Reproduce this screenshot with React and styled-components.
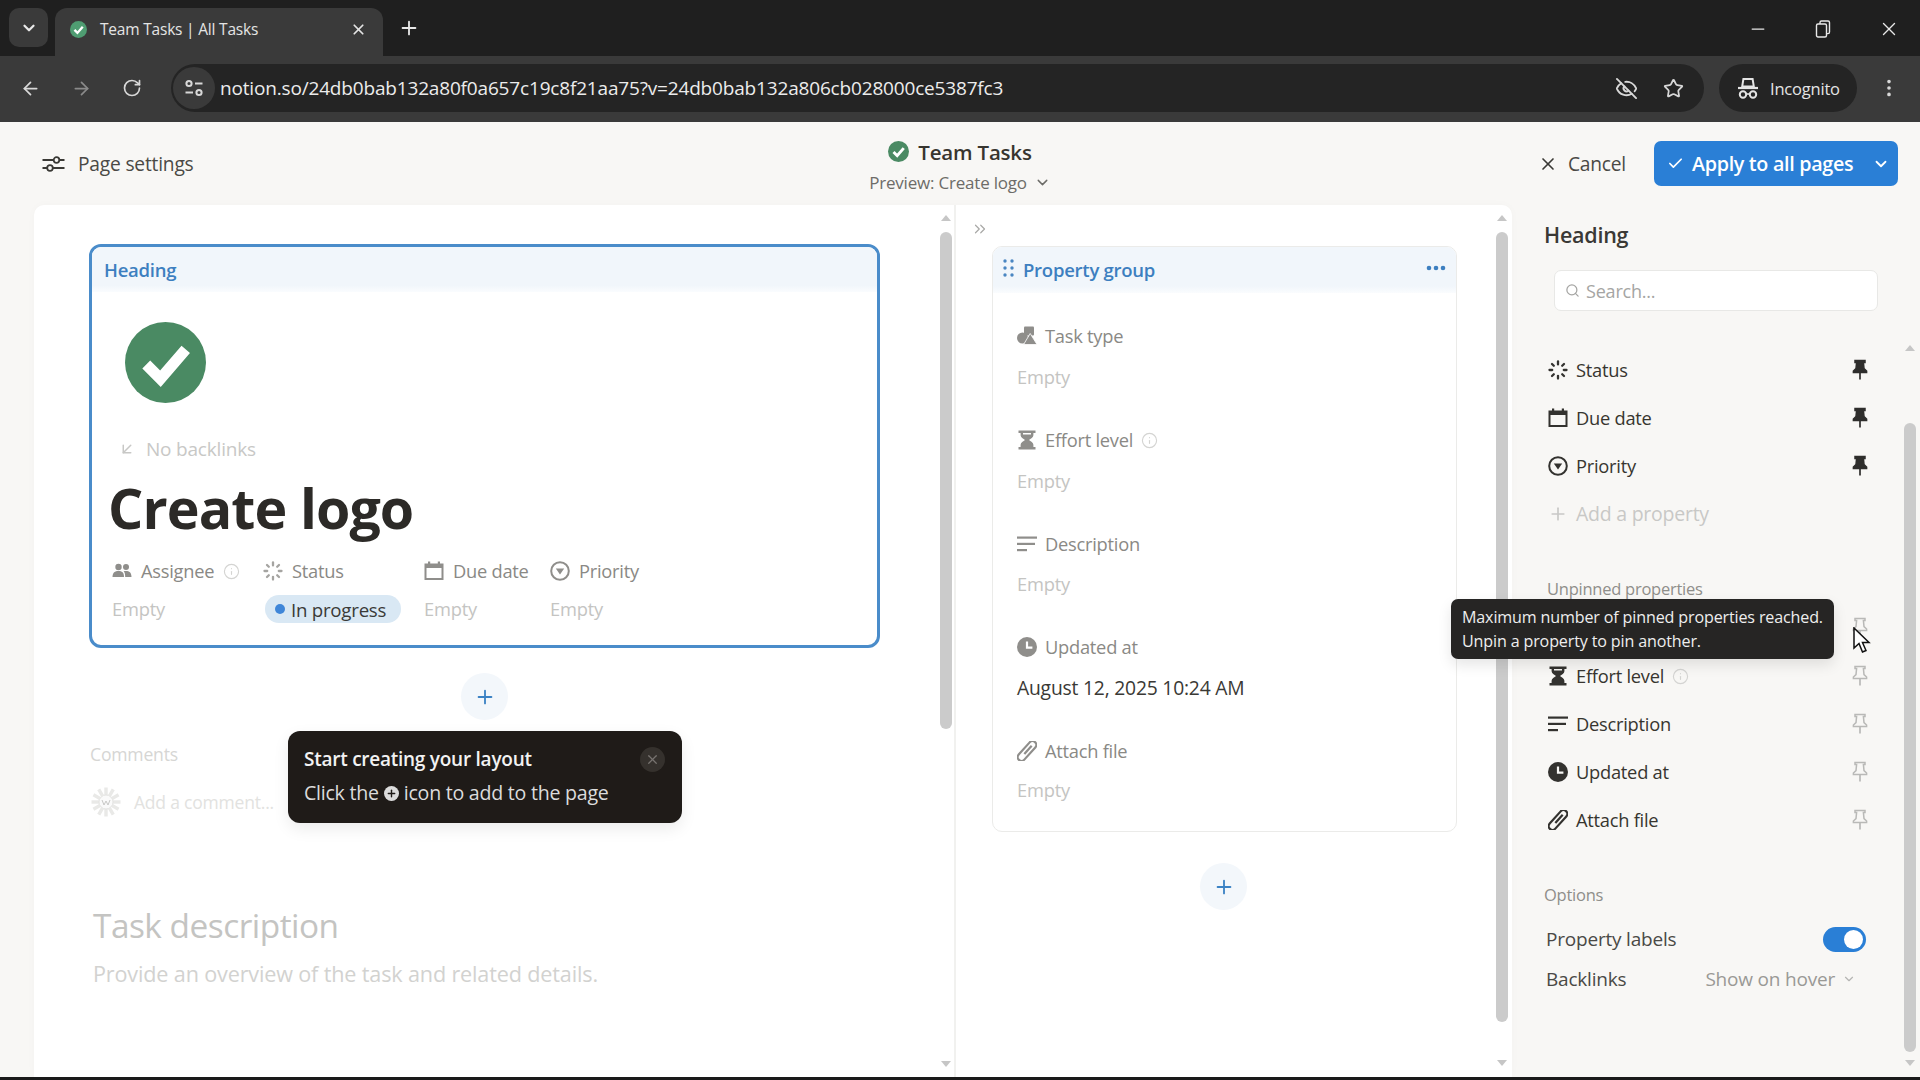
import React from "react";
import styled, { createGlobalStyle } from "styled-components";
import {
  ArrowLeft,
  ArrowRight,
  RotateCw,
  EyeOff,
  Star,
  X,
  Plus,
  Check,
  ChevronDown,
  ChevronsRight,
  Search,
  Minus,
  EllipsisVertical,
  Info,
  ArrowDownLeft,
} from "lucide-react";

const GlobalStyle = createGlobalStyle`
  html, body { margin: 0; padding: 0; background: #f8f7f5; }
  * { box-sizing: border-box; }
  body { font-family: "Open Sans", "Noto Sans", "Liberation Sans", sans-serif; color: #37352f; }
`;

const Page = styled.div`
  width: 1920px;
  height: 1080px;
  display: flex;
  flex-direction: column;
  overflow: hidden;
  background: #f8f7f5;
`;

/* browser chrome */
const TabStrip = styled.div`
  height: 56px;
  flex: none;
  background: #1f1f1f;
  display: flex;
  align-items: flex-end;
  padding-left: 9px;
`;
const TabSearch = styled.div`
  width: 39px;
  height: 39px;
  margin-bottom: 9px;
  border-radius: 10px;
  background: #3a3a3a;
  color: #e8e8e8;
  display: flex;
  align-items: center;
  justify-content: center;
`;
const Tab = styled.div`
  width: 328px;
  height: 48px;
  margin-left: 7px;
  padding: 0 16px 6px 15px;
  background: #3a3a3a;
  border-radius: 12px 12px 0 0;
  display: flex;
  align-items: center;
  color: #e4e4e4;
`;
const TabTitle = styled.span`
  flex: 1;
  margin-left: 13px;
  font-size: 15.5px;
  letter-spacing: -0.2px;
  white-space: nowrap;
`;
const NewTab = styled.div`
  margin: 0 0 17px 15px;
  color: #e8e8e8;
  display: flex;
`;
const WindowButtons = styled.div`
  margin-left: auto;
  margin-bottom: 16px;
  padding-right: 20px;
  display: flex;
  align-items: center;
  gap: 47px;
  color: #e8e8e8;
`;
const Toolbar = styled.div`
  height: 66px;
  flex: none;
  background: #3a3a3a;
  display: flex;
  align-items: center;
  padding: 0 20px 2px 20px;
  color: #d8d8d8;
`;
const NavIcons = styled.div`
  width: 151px;
  display: flex;
  align-items: center;
  gap: 30px;
`;
const Omnibox = styled.div`
  width: 1533px;
  height: 48px;
  background: #242424;
  border-radius: 24px;
  display: flex;
  align-items: center;
  padding: 0 20px 0 2px;
`;
const SiteButton = styled.div`
  width: 42px;
  height: 42px;
  border-radius: 50%;
  background: #3a3a3a;
  display: flex;
  align-items: center;
  justify-content: center;
`;
const Url = styled.span`
  flex: 1;
  margin-left: 5px;
  color: #ececec;
  font-size: 19px;
  letter-spacing: -0.17px;
  white-space: nowrap;
`;
const OmniIcons = styled.div`
  display: flex;
  align-items: center;
  gap: 25px;
`;
const IncognitoPill = styled.div`
  width: 138px;
  height: 48px;
  margin-left: 15px;
  border-radius: 24px;
  background: #242424;
  display: flex;
  align-items: center;
  gap: 11px;
  padding-left: 18px;
  color: #e4e4e4;
  font-size: 16.5px;
  letter-spacing: -0.2px;
`;
const MenuDots = styled.div`
  margin-left: 21px;
  display: flex;
`;

/* page header */
const TopBar = styled.div`
  height: 83px;
  flex: none;
  display: grid;
  grid-template-columns: 1fr auto 1fr;
  align-items: center;
  padding: 0 22px;
`;
const GhostButton = styled.div`
  display: flex;
  align-items: center;
  gap: ${(p) => p.$gap}px;
  margin-left: ${(p) => p.$indent || 0}px;
  font-size: 19.2px;
  letter-spacing: -0.2px;
  color: #4a4945;
`;
const CenterTitle = styled.div`
  margin-top: 7px;
  display: flex;
  flex-direction: column;
  align-items: center;
  gap: 7px;
`;
const DbName = styled.div`
  display: flex;
  align-items: center;
  gap: 9px;
  font-size: 20.5px;
  line-height: 24px;
  font-weight: 600;
  letter-spacing: -0.2px;
`;
const PreviewName = styled.div`
  display: flex;
  align-items: center;
  gap: 7px;
  font-size: 17px;
  line-height: 24px;
  letter-spacing: -0.2px;
  color: #6d6c68;
`;
const TopActions = styled.div`
  display: flex;
  align-items: center;
  justify-content: flex-end;
  gap: 28px;
`;
const ApplyButton = styled.div`
  width: 244px;
  height: 45px;
  border-radius: 7px;
  background: #2a7fd6;
  color: #fff;
  display: flex;
  align-items: center;
  padding-left: 13px;
  font-size: 19.7px;
  font-weight: 600;
  letter-spacing: -0.3px;
  white-space: nowrap;
`;
const ApplyLabel = styled.span`
  flex: 1;
  margin-left: 8px;
`;
const ApplyCaret = styled.span`
  width: 34px;
  display: flex;
  justify-content: center;
`;

/* canvas */
const Body = styled.div`
  flex: 1;
  min-height: 0;
  display: flex;
  padding-left: 34px;
`;
const Canvas = styled.div`
  width: 1478px;
  background: #fff;
  border-radius: 10px 10px 0 0;
  display: flex;
  box-shadow: 0 0 10px rgba(0, 0, 0, 0.025);
`;
const LeftColumn = styled.div`
  width: 922px;
  position: relative;
  display: flex;
  border-right: 2px solid #f1f1ef;
`;
const LeftContent = styled.div`
  width: 906px;
  padding: 39px 0 0 55px;
`;
const RightColumn = styled.div`
  flex: 1;
  display: flex;
`;
const RightContent = styled.div`
  width: 540px;
  padding: 12px 0 0 0;
`;
const ScrollTrack = styled.div`
  width: 12px;
  height: 100%;
  flex: none;
  display: flex;
  flex-direction: column;
  align-items: center;
  padding-top: ${(p) => p.$top || 10}px;
`;
const ScrollUp = styled.div`
  width: 0;
  height: 0;
  border-left: 5px solid transparent;
  border-right: 5px solid transparent;
  border-bottom: 6px solid #c6c6c6;
`;
const ScrollDown = styled(ScrollUp)`
  border-bottom: 0;
  border-top: 6px solid #c6c6c6;
  position: relative;
  top: ${(p) => p.$offset}px;
`;
const ScrollThumb = styled.div`
  width: 12px;
  margin-top: ${(p) => p.$gap}px;
  height: ${(p) => p.$height}px;
  border-radius: 6px;
  background: #cbcbcb;
`;

const HeadingCard = styled.div`
  width: 791px;
  height: 404px;
  border: 3px solid #4a8cca;
  border-radius: 12px;
  overflow: hidden;
`;
const CardHead = styled.div`
  height: ${(p) => p.$height || 45}px;
  background: linear-gradient(#f1f6fb, #f1f6fb 85%, #fafcfe);
  display: flex;
  align-items: center;
  padding: 0 ${(p) => p.$inset || 12}px ${(p) => p.$lift || 0}px ${(p) => p.$pad || 12}px;
  color: #3d7fc0;
  font-size: 18.5px;
  font-weight: 600;
  letter-spacing: -0.25px;
`;
const PageIcon = styled.div`
  width: 81px;
  height: 81px;
  margin: 30px 0 0 33px;
`;
const Backlinks = styled.div`
  margin: 34px 0 0 26px;
  height: 24px;
  display: flex;
  align-items: center;
  gap: 10px;
  color: #c8c8c6;
  font-size: 19px;
  letter-spacing: -0.2px;
`;
const PageTitle = styled.div`
  margin: 15px 0 0 16px;
  font-size: 55.5px;
  line-height: 64px;
  font-weight: 700;
  letter-spacing: -0.9px;
  color: #2c2a27;
`;
const PropGrid = styled.div`
  margin: 19px 0 0 20px;
  display: grid;
  grid-template-columns: 151px 161px 126px auto;
  grid-template-rows: 24px 28px;
  row-gap: 12px;
  align-items: center;
`;
const PropLabel = styled.div`
  display: flex;
  align-items: center;
  gap: ${(p) => (p.$gap === undefined ? 9 : p.$gap)}px;
  color: ${(p) => (p.$dark ? "#37352f" : "#8a8985")};
  font-size: 18.3px;
  line-height: 24px;
  letter-spacing: -0.25px;
  white-space: nowrap;
`;
const AddProperty = styled(PropLabel)`
  color: #c8c8c6;
  font-size: 19.5px;
`;
const EmptyValue = styled.div`
  color: #c4c4c2;
  font-size: 18.3px;
  line-height: 28px;
  letter-spacing: -0.2px;
`;
const StatusPill = styled.div`
  width: 136px;
  height: 28px;
  margin-left: 2px;
  border-radius: 14px;
  background: #d9e8f4;
  display: flex;
  align-items: center;
  gap: 6px;
  padding-left: 10px;
  font-size: 18.7px;
  letter-spacing: -0.25px;
  color: #3a3a38;
`;
const StatusDot = styled.span`
  width: 10px;
  height: 10px;
  border-radius: 50%;
  background: #3f86d8;
`;
const AddButton = styled.div`
  width: 47px;
  height: 47px;
  margin: ${(p) => p.$margin};
  border-radius: 50%;
  background: #f3f7fb;
  color: #3b82c4;
  display: flex;
  align-items: center;
  justify-content: center;
`;
const CommentsLabel = styled.div`
  margin: 22px 0 0 1px;
  color: #d6d6d4;
  font-size: 17.6px;
  line-height: 24px;
  letter-spacing: -0.2px;
`;
const CommentRow = styled.div`
  margin-top: 22px;
  height: 28px;
  display: flex;
  align-items: center;
  gap: 13px;
  color: #e2e2e0;
  font-size: 17.5px;
  letter-spacing: -0.2px;
`;
const SectionTitle = styled.div`
  margin: 87px 0 0 4px;
  color: #c4c4c2;
  font-size: 33.4px;
  line-height: 44px;
  font-weight: 500;
  letter-spacing: -0.5px;
`;
const SectionHint = styled.div`
  margin: 13px 0 0 4px;
  color: #d2d2d0;
  font-size: 21.6px;
  line-height: 28px;
  letter-spacing: -0.15px;
`;
const Coachmark = styled.div`
  position: absolute;
  left: 254px;
  top: 526px;
  width: 394px;
  height: 92px;
  border-radius: 12px;
  background: #1f1b18;
  color: #f2f2f2;
  padding: 16px 16px 0;
  box-shadow: 0 6px 16px rgba(0, 0, 0, 0.08);
`;
const CoachTitle = styled.div`
  font-size: 19px;
  line-height: 24px;
  font-weight: 600;
  letter-spacing: -0.25px;
`;
const CoachText = styled.div`
  margin-top: 10px;
  display: flex;
  align-items: center;
  gap: 5px;
  font-size: 19.6px;
  line-height: 24px;
  letter-spacing: -0.25px;
  color: #dcdcdc;
`;
const CoachDot = styled.span`
  width: 15px;
  height: 15px;
  border-radius: 50%;
  background: #dcdcdc;
  color: #1f1b18;
  display: flex;
  align-items: center;
  justify-content: center;
`;
const CoachClose = styled.div`
  position: absolute;
  top: 16px;
  right: 17px;
  width: 25px;
  height: 25px;
  border-radius: 50%;
  background: #35312d;
  color: #77736f;
  display: flex;
  align-items: center;
  justify-content: center;
`;

/* property group */
const CollapseRow = styled.div`
  height: 24px;
  padding-left: 15px;
  color: #a8a8a6;
  display: flex;
  align-items: center;
`;
const GroupCard = styled.div`
  width: 465px;
  height: 586px;
  margin: 5px 0 0 36px;
  border: 1px solid #ebebe9;
  border-radius: 10px;
  overflow: hidden;
`;
const GroupHeadText = styled.span`
  flex: 1;
  margin-left: 9px;
`;
const GroupBody = styled.div`
  padding: 31px 0 0 24px;
  display: flex;
  flex-direction: column;
  gap: 37px;
`;
const GroupItem = styled.div`
  display: flex;
  flex-direction: column;
  gap: ${(p) => p.$gap || 15}px;
`;
const DateValue = styled.div`
  font-size: 19.3px;
  line-height: 28px;
  letter-spacing: -0.2px;
  color: #3a3935;
`;

/* sidebar */
const Sidebar = styled.div`
  flex: 1;
  position: relative;
  display: flex;
`;
const SideContent = styled.div`
  width: 392px;
  padding: 15px 0 0 32px;
`;
const SideTitle = styled.div`
  font-size: 21.5px;
  line-height: 30px;
  font-weight: 600;
  letter-spacing: -0.25px;
  color: #3a3935;
`;
const SearchBox = styled.div`
  width: 324px;
  height: 41px;
  margin: 20px 0 35px 10px;
  background: #fff;
  border: 1px solid #e8e8e6;
  border-radius: 7px;
  display: flex;
  align-items: center;
  gap: 6px;
  padding-left: 10px;
  color: #a5a5a3;
  font-size: 18px;
  letter-spacing: -0.2px;
`;
const PropRow = styled.div`
  width: 321px;
  height: 48px;
  margin-left: 4px;
  padding-right: 1px;
  display: flex;
  align-items: center;
  justify-content: space-between;
`;
const SectionLabel = styled.div`
  margin: 39px 0 ${(p) => p.$after || 0}px ${(p) => p.$indent}px;
  color: #8f8e8a;
  font-size: 16.5px;
  line-height: 24px;
  font-weight: 500;
  letter-spacing: -0.25px;
`;
const OptionRow = styled.div`
  width: 323px;
  height: ${(p) => p.$height}px;
  margin: ${(p) => p.$margin || "0 0 0 2px"};
  display: flex;
  align-items: center;
  justify-content: space-between;
`;
const OptionName = styled.span`
  font-size: 19px;
  letter-spacing: -0.2px;
  color: #4a4945;
`;
const Toggle = styled.div`
  width: 43px;
  height: 25px;
  margin-right: 3px;
  border-radius: 13px;
  background: #2a7fd6;
  display: flex;
  align-items: center;
  justify-content: flex-end;
  padding-right: 3px;
`;
const ToggleKnob = styled.span`
  width: 19px;
  height: 19px;
  border-radius: 50%;
  background: #fff;
`;
const SelectValue = styled.span`
  display: flex;
  align-items: center;
  gap: 7px;
  margin-right: -2px;
  padding-right: 15px;
  color: #9a9995;
  font-size: 19px;
  letter-spacing: -0.2px;
`;
const PinTooltip = styled.div`
  position: absolute;
  left: -61px;
  top: 394px;
  width: 383px;
  height: 60px;
  padding: 6px 11px;
  border-radius: 7px;
  background: #262524;
  color: #eeeeee;
  font-size: 16.1px;
  line-height: 24px;
  letter-spacing: -0.15px;
  white-space: nowrap;
  box-shadow: 0 6px 14px rgba(0, 0, 0, 0.1);
`;
const Cursor = styled.svg`
  position: absolute;
  left: 341px;
  top: 422px;
`;
const BottomEdge = styled.div`
  height: 3px;
  flex: none;
  background: #1a1a1a;
`;

/* drawn icons */
const Svg = ({ size = 20, color = "currentColor", children, vb = "0 0 20 20" }) => (
  <svg width={size} height={size} viewBox={vb} fill={color} style={{ flex: "none", color }}>
    {children}
  </svg>
);

const CheckCircle = ({ size, color = "#4a8a63" }) => (
  <svg width={size} height={size} viewBox="0 0 80 80" style={{ flex: "none", display: "block" }}>
    <circle cx="40" cy="40" r="40" fill={color} />
    <path d="M21 42 L35 56 L60 27" fill="none" stroke="#fff" strokeWidth="11" />
  </svg>
);

const SettingsIcon = () => (
  <svg width="23" height="20" viewBox="0 0 23 20" fill="#f8f7f5" stroke="#3a3935" strokeWidth="1.8" style={{ flex: "none" }}>
    <path d="M0.5 6 H22.5 M0.5 14 H22.5" />
    <circle cx="14.5" cy="6" r="2.8" />
    <circle cx="8" cy="14" r="2.8" />
  </svg>
);

const SiteTuneIcon = () => (
  <svg width="20" height="20" viewBox="0 0 20 20" fill="none" stroke="#d8d8d8" strokeWidth="2" style={{ flex: "none" }}>
    <circle cx="5" cy="5.5" r="2.6" />
    <path d="M11 5.5 H18.5" />
    <path d="M1.5 14.5 H9" />
    <circle cx="15" cy="14.5" r="2.6" />
  </svg>
);

const PeopleIcon = ({ color }) => (
  <Svg color={color}>
    <circle cx="6.5" cy="6" r="3.2" />
    <circle cx="14" cy="6" r="3" />
    <path d="M0.5 16 C0.5 11.5 3 10 6.5 10 C10 10 12 11.5 12 16 Z" />
    <path d="M13.2 16 C13.2 13 12.8 11.4 11.6 10.3 C12.3 10 13.1 10 14 10 C17.2 10 19.5 11.5 19.5 16 Z" />
  </Svg>
);

const StatusIcon = ({ color }) => (
  <Svg color={color}>
    <g stroke={color} strokeWidth="2.3" strokeLinecap="round">
      <path d="M10 1.5 V4.4" />
      <path d="M16 4 L14.2 5.8" />
      <path d="M18.5 10 H15.8" />
      <path d="M16 16 L14.2 14.2" />
      <path d="M10 18.5 V15.8" />
      <path d="M4 16 L5.8 14.2" />
      <path d="M1.5 10 H4.2" />
      <path d="M4 4 L5.8 5.8" />
    </g>
  </Svg>
);

const CalendarIcon = ({ color }) => (
  <Svg color={color}>
    <path
      fillRule="evenodd"
      d="M4 0.5 H6.2 V2.5 H13.8 V0.5 H16 V2.5 H19.5 V19 H0.5 V2.5 H4 Z M2.5 7 V17 H17.5 V7 Z"
    />
  </Svg>
);

const PriorityIcon = ({ color }) => (
  <Svg color={color}>
    <circle cx="10" cy="10" r="8.8" fill="none" stroke={color} strokeWidth="2" />
    <path d="M5.8 7.6 H14.2 L10 13.6 Z" />
  </Svg>
);

const HourglassIcon = ({ color }) => (
  <Svg color={color}>
    <path
      fillRule="evenodd"
      d="M1.5 0.5 H18.5 V3 H16.4 V5.2 C16.4 7.4 13.6 8.7 12 10 C13.6 11.3 16.4 12.6 16.4 14.8 V17 H18.5 V19.5 H1.5 V17 H3.6 V14.8 C3.6 12.6 6.4 11.3 8 10 C6.4 8.7 3.6 7.4 3.6 5.2 V3 H1.5 Z M6 3 V4.6 H14 V3 Z"
    />
  </Svg>
);

const TextIcon = ({ color }) => (
  <Svg color={color}>
    <rect x="0" y="2.5" width="20" height="2.2" />
    <rect x="0" y="8.8" width="18" height="2.2" />
    <rect x="0" y="15" width="10" height="2.2" />
  </Svg>
);

const ClockIcon = ({ color, bg = "#fff" }) => (
  <Svg color={color}>
    <circle cx="10" cy="10" r="10" />
    <path d="M10 4.4 V10.6 H15.4" fill="none" stroke={bg} strokeWidth="2.2" />
  </Svg>
);

const ClipIcon = ({ color }) => (
  <svg width="20" height="20" viewBox="0 0 20 20" fill="none" stroke={color} strokeWidth="2.2" style={{ flex: "none" }}>
    <g transform="rotate(42 10 10)">
      <rect x="6.2" y="-2" width="7.6" height="24" rx="3.8" />
      <path d="M10 3 V14" />
    </g>
  </svg>
);

const ShapesIcon = ({ color }) => (
  <Svg color={color}>
    <rect x="7" y="0.5" width="10" height="9" rx="1" />
    <circle cx="5.5" cy="12" r="5.5" />
    <path d="M13.2 7.5 L20 18.5 H6.6 Z" stroke="#fff" strokeWidth="0.8" />
  </Svg>
);

const InfoIcon = () => <Info size={17} color="#d4d4d2" strokeWidth={1.6} style={{ flex: "none" }} />;

const PinIcon = ({ filled }) => {
  const color = filled ? "#2f2e2c" : "#b9b9b7";
  return (
    <svg width="16" height="22" viewBox="0 0 16 22" style={{ flex: "none" }}>
      <path
        d="M3 1.5 H13 V3.4 H11.4 L12 9.6 L14.6 12 V13.6 H1.4 V12 L4 9.6 L4.6 3.4 H3 Z"
        fill={filled ? color : "none"}
        stroke={color}
        strokeWidth="1.5"
      />
      <path d="M8 13.6 V20.5" stroke={color} strokeWidth="1.7" />
    </svg>
  );
};

const DragDots = () => (
  <svg width="11" height="18" viewBox="0 0 11 18" style={{ flex: "none", marginBottom: 2 }}>
    {[2, 9, 16].map((y) =>
      [2, 9].map((x) => <circle key={`${x}${y}`} cx={x} cy={y} r="1.7" fill="#4a86c2" />)
    )}
  </svg>
);

const RowDots = () => (
  <svg width="20" height="6" viewBox="0 0 20 6" style={{ flex: "none", marginBottom: 3 }}>
    {[3, 10, 17].map((x) => (
      <circle key={x} cx={x} cy="3" r="2.3" fill="#3d7fc0" />
    ))}
  </svg>
);

const RestoreIcon = () => (
  <svg width="16" height="20" viewBox="0 0 16 20" fill="none" stroke="currentColor" strokeWidth="1.4">
    <rect x="1.5" y="5" width="10" height="13" rx="1.5" />
    <path d="M5 5 V3.5 C5 2.5 5.5 2 6.5 2 H13 C14 2 14.5 2.5 14.5 3.5 V13 C14.5 14 14 14.6 13 14.6 H11.5" />
  </svg>
);

const IncognitoIcon = () => (
  <svg width="22" height="24" viewBox="0 0 22 24" fill="none" stroke="currentColor" style={{ flex: "none" }}>
    <path d="M6.4 3 H15.6 L16.8 10.4 H5.2 Z" strokeWidth="2" />
    <path d="M1 12 H21" strokeWidth="2.2" />
    <circle cx="6" cy="18.5" r="3.2" strokeWidth="2" />
    <circle cx="16" cy="18.5" r="3.2" strokeWidth="2" />
    <path d="M9 18 H13" strokeWidth="1.6" />
  </svg>
);

const AvatarIcon = () => (
  <svg width="30" height="32" viewBox="-15 -16 30 32" style={{ flex: "none", marginLeft: 2 }}>
    {Array.from({ length: 12 }, (_, i) => (
      <line
        key={i}
        x1="0"
        y1="-7"
        x2="0"
        y2="-14.5"
        stroke="#e9e9e7"
        strokeWidth="3.4"
        transform={`rotate(${i * 30})`}
      />
    ))}
    <circle r="7" fill="#fafafa" stroke="#e4e4e2" strokeWidth="1" />
    <path d="M-4 -2 L-2 3 L0 -1 L2 3 L4 -2" fill="none" stroke="#c8c8c6" strokeWidth="1" />
  </svg>
);

const GroupProp = ({ icon: Icon, label, info, value, empty = true, gap }) => (
  <GroupItem $gap={gap}>
    <PropLabel $gap={8}>
      <Icon color="#8f8e8b" />
      {label}
      {info && <InfoIcon />}
    </PropLabel>
    {empty ? <EmptyValue>{value}</EmptyValue> : <DateValue>{value}</DateValue>}
  </GroupItem>
);

const SideProp = ({ icon: Icon, label, info, pinned, bg }) => (
  <PropRow>
    <PropLabel $dark $gap={8}>
      <Icon color="#33322f" bg={bg} />
      {label}
      {info && <InfoIcon />}
    </PropLabel>
    <PinIcon filled={pinned} />
  </PropRow>
);

const App = () => (
  <Page>
    <GlobalStyle />
    <TabStrip>
      <TabSearch>
        <ChevronDown size={18} strokeWidth={3} />
      </TabSearch>
      <Tab>
        <CheckCircle size={17} color="#4f9d72" />
        <TabTitle>Team Tasks | All Tasks</TabTitle>
        <X size={17} strokeWidth={2.4} />
      </Tab>
      <NewTab>
        <Plus size={22} strokeWidth={2} />
      </NewTab>
      <WindowButtons>
        <Minus size={20} strokeWidth={1.5} />
        <RestoreIcon />
        <X size={22} strokeWidth={1.5} />
      </WindowButtons>
    </TabStrip>
    <Toolbar>
      <NavIcons>
        <ArrowLeft size={21} />
        <ArrowRight size={21} color="#8a8a8a" />
        <RotateCw size={20} />
      </NavIcons>
      <Omnibox>
        <SiteButton>
          <SiteTuneIcon />
        </SiteButton>
        <Url>notion.so/24db0bab132a80f0a657c19c8f21aa75?v=24db0bab132a806cb028000ce5387fc3</Url>
        <OmniIcons>
          <EyeOff size={23} />
          <Star size={21} />
        </OmniIcons>
      </Omnibox>
      <IncognitoPill>
        <IncognitoIcon />
        Incognito
      </IncognitoPill>
      <MenuDots>
        <EllipsisVertical size={22} />
      </MenuDots>
    </Toolbar>

    <TopBar>
      <GhostButton $gap={13} $indent={20}>
        <SettingsIcon />
        Page settings
      </GhostButton>
      <CenterTitle>
        <DbName>
          <CheckCircle size={21} />
          Team Tasks
        </DbName>
        <PreviewName>
          Preview: Create logo
          <ChevronDown size={17} />
        </PreviewName>
      </CenterTitle>
      <TopActions>
        <GhostButton $gap={10}>
          <X size={20} color="#3a3935" />
          Cancel
        </GhostButton>
        <ApplyButton>
          <Check size={17} strokeWidth={2.4} />
          <ApplyLabel>Apply to all pages</ApplyLabel>
          <ApplyCaret>
            <ChevronDown size={18} strokeWidth={2.4} />
          </ApplyCaret>
        </ApplyButton>
      </TopActions>
    </TopBar>

    <Body>
      <Canvas>
        <LeftColumn>
          <LeftContent>
            <HeadingCard>
              <CardHead>Heading</CardHead>
              <PageIcon>
                <CheckCircle size={81} />
              </PageIcon>
              <Backlinks>
                <ArrowDownLeft size={18} />
                No backlinks
              </Backlinks>
              <PageTitle>Create logo</PageTitle>
              <PropGrid>
                <PropLabel>
                  <PeopleIcon color="#8f8e8b" />
                  Assignee
                  <InfoIcon />
                </PropLabel>
                <PropLabel>
                  <StatusIcon color="#a5a4a1" />
                  Status
                </PropLabel>
                <PropLabel>
                  <CalendarIcon color="#8f8e8b" />
                  Due date
                </PropLabel>
                <PropLabel>
                  <PriorityIcon color="#8f8e8b" />
                  Priority
                </PropLabel>
                <EmptyValue>Empty</EmptyValue>
                <StatusPill>
                  <StatusDot />
                  In progress
                </StatusPill>
                <EmptyValue>Empty</EmptyValue>
                <EmptyValue>Empty</EmptyValue>
              </PropGrid>
            </HeadingCard>
            <AddButton $margin="25px 0 0 372px">
              <Plus size={22} strokeWidth={2} />
            </AddButton>
            <CommentsLabel>Comments</CommentsLabel>
            <CommentRow>
              <AvatarIcon />
              Add a comment...
            </CommentRow>
            <SectionTitle>Task description</SectionTitle>
            <SectionHint>Provide an overview of the task and related details.</SectionHint>
          </LeftContent>
          <ScrollTrack>
            <ScrollUp />
            <ScrollThumb $gap={11} $height={497} />
            <ScrollDown $offset={332} />
          </ScrollTrack>
          <Coachmark>
            <CoachTitle>Start creating your layout</CoachTitle>
            <CoachText>
              Click the
              <CoachDot>
                <Plus size={11} strokeWidth={3} />
              </CoachDot>
              icon to add to the page
            </CoachText>
            <CoachClose>
              <X size={15} />
            </CoachClose>
          </Coachmark>
        </LeftColumn>
        <RightColumn>
          <RightContent>
            <CollapseRow>
              <ChevronsRight size={18} strokeWidth={1.6} />
            </CollapseRow>
            <GroupCard>
              <CardHead $height={46} $pad={10} $inset={10} $lift={2}>
                <DragDots />
                <GroupHeadText>Property group</GroupHeadText>
                <RowDots />
              </CardHead>
              <GroupBody>
                <GroupProp icon={ShapesIcon} label="Task type" value="Empty" />
                <GroupProp icon={HourglassIcon} label="Effort level" info value="Empty" />
                <GroupProp icon={TextIcon} label="Description" value="Empty" gap={14} />
                <GroupProp icon={ClockIcon} label="Updated at" value="August 12, 2025 10:24 AM" empty={false} />
                <GroupProp icon={ClipIcon} label="Attach file" value="Empty" gap={13} />
              </GroupBody>
            </GroupCard>
            <AddButton $margin="31px 0 0 244px">
              <Plus size={22} strokeWidth={2} />
            </AddButton>
          </RightContent>
          <ScrollTrack>
            <ScrollUp />
            <ScrollThumb $gap={11} $height={790} />
            <ScrollDown $offset={38} />
          </ScrollTrack>
        </RightColumn>
      </Canvas>
      <Sidebar>
        <SideContent>
          <SideTitle>Heading</SideTitle>
          <SearchBox>
            <Search size={15} />
            Search...
          </SearchBox>
          <SideProp icon={StatusIcon} label="Status" pinned />
          <SideProp icon={CalendarIcon} label="Due date" pinned />
          <SideProp icon={PriorityIcon} label="Priority" pinned />
          <PropRow>
            <AddProperty $gap={8}>
              <Plus size={20} color="#c8c8c6" />
              Add a property
            </AddProperty>
          </PropRow>
          <SectionLabel $indent={3} $after={3}>
            Unpinned properties
          </SectionLabel>
          <PropRow>
            <span />
            <PinIcon />
          </PropRow>
          <SideProp icon={HourglassIcon} label="Effort level" info />
          <SideProp icon={TextIcon} label="Description" />
          <SideProp icon={ClockIcon} label="Updated at" bg="#f8f7f5" />
          <SideProp icon={ClipIcon} label="Attach file" />
          <SectionLabel $indent={0}>Options</SectionLabel>
          <OptionRow $height={40} $margin="12px 0 0 2px">
            <OptionName>Property labels</OptionName>
            <Toggle>
              <ToggleKnob />
            </Toggle>
          </OptionRow>
          <OptionRow $height={40}>
            <OptionName>Backlinks</OptionName>
            <SelectValue>
              Show on hover
              <ChevronDown size={14} color="#b5b5b3" />
            </SelectValue>
          </OptionRow>
        </SideContent>
        <ScrollTrack $top={140}>
          <ScrollUp />
          <ScrollThumb $gap={72} $height={629} />
          <ScrollDown $offset={8} />
        </ScrollTrack>
        <PinTooltip>
          Maximum number of pinned properties reached.
          <br />
          Unpin a property to pin another.
        </PinTooltip>
        <Cursor width="18" height="28" viewBox="0 0 18 28">
          <path d="M1 1 V21 L6 16.5 L9.5 25 L13 23.5 L9.5 15.5 H16 Z" fill="#fff" stroke="#111" strokeWidth="1.5" />
        </Cursor>
      </Sidebar>
    </Body>
    <BottomEdge />
  </Page>
);

export default App;
